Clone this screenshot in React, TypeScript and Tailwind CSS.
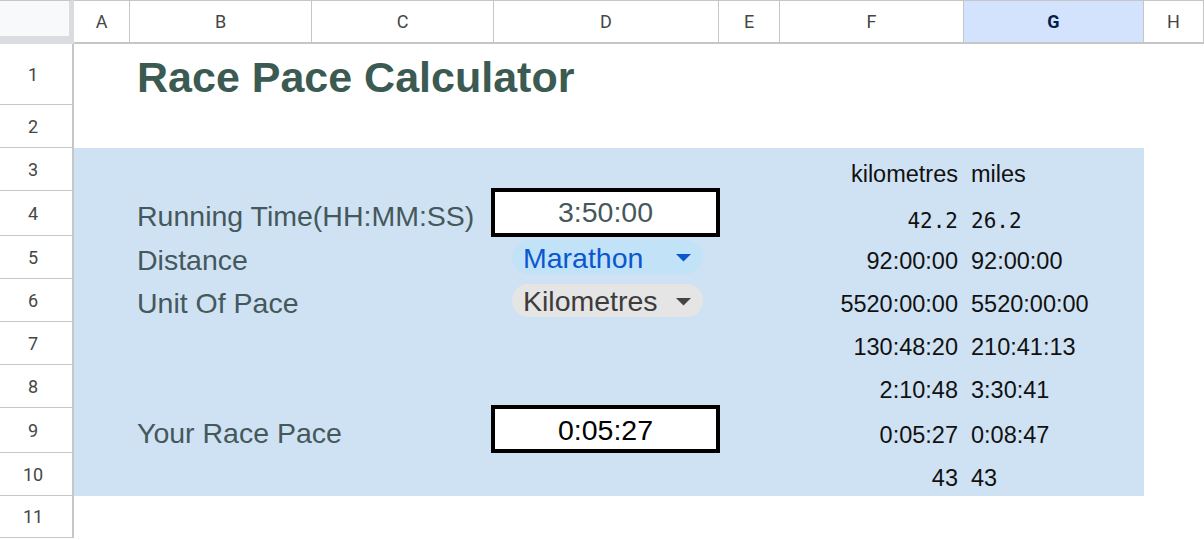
import React from "react";

const sans = "font-['Liberation_Sans',Arial,sans-serif]";

const colHeads = [
  { label: "A", cls: "col-start-2" },
  { label: "B", cls: "col-start-3" },
  { label: "C", cls: "col-start-4" },
  { label: "D", cls: "col-start-5" },
  { label: "E", cls: "col-start-6" },
  { label: "F", cls: "col-start-7" },
  { label: "G", cls: "col-start-8", active: true },
  { label: "H", cls: "col-start-9" },
];

const rowHeads = [
  { n: 1, cls: "row-start-2" },
  { n: 2, cls: "row-start-3" },
  { n: 3, cls: "row-start-4" },
  { n: 4, cls: "row-start-5" },
  { n: 5, cls: "row-start-6" },
  { n: 6, cls: "row-start-7" },
  { n: 7, cls: "row-start-8" },
  { n: 8, cls: "row-start-9" },
  { n: 9, cls: "row-start-10" },
  { n: 10, cls: "row-start-11" },
  { n: 11, cls: "row-start-12" },
];

// right-hand table, kilometres (F) and miles (G)
const results = [
  { row: "row-start-5", km: "42.2", mi: "26.2", mono: true },
  { row: "row-start-6", km: "92:00:00", mi: "92:00:00" },
  { row: "row-start-7", km: "5520:00:00", mi: "5520:00:00" },
  { row: "row-start-8", km: "130:48:20", mi: "210:41:13" },
  { row: "row-start-9", km: "2:10:48", mi: "3:30:41" },
  { row: "row-start-10", km: "0:05:27", mi: "0:08:47" },
  { row: "row-start-11", km: "43", mi: "43" },
];

function Caret({ color }: { color: string }) {
  return (
    <svg width="15" height="8" viewBox="0 0 15 8" className="shrink-0">
      <path d="M0 0 H15 L7.5 7.5 Z" fill={color} />
    </svg>
  );
}

function Label({ row, text }: { row: string; text: string }) {
  return (
    <div
      className={`col-start-3 col-end-5 ${row} flex items-center pl-[7px] pt-[5px] whitespace-nowrap text-[28.5px] leading-[33px] text-[#45585b] ${sans}`}
    >
      {text}
    </div>
  );
}

export default function App() {
  return (
    <div className="w-[1204px] h-[540px] overflow-hidden bg-white">
      <div className="grid grid-cols-[74px_56px_182px_182px_225px_61px_184px_180px_60px] grid-rows-[44px_61px_43px_43px_45px_43px_43px_43px_43px_45px_43px_42px]">
        {/* corner */}
        <div className="col-start-1 row-start-1 bg-[#f8f9fa] border-t border-[#c4c7c5] border-b-[8px] border-r-[5px] border-b-[#dadcdf] border-r-[#dadcdf]" />

        {colHeads.map((c) => (
          <div
            key={c.label}
            className={`${c.cls} row-start-1 flex items-center justify-center border-t border-r border-b-2 border-[#c4c7c5] font-['Roboto',sans-serif] text-[18px] ${
              c.active ? "bg-[#d3e3fd] font-bold text-[#041e49]" : "bg-white text-[#444746]"
            }`}
          >
            {c.label}
          </div>
        ))}

        {rowHeads.map((r) => (
          <div
            key={r.n}
            className={`col-start-1 ${r.cls} flex items-center justify-center pr-[6px] border-r-2 border-b border-[#c4c7c5] bg-white font-['Roboto',sans-serif] text-[18px] text-[#444746]`}
          >
            {r.n}
          </div>
        ))}

        {/* blue block */}
        <div className="col-start-2 col-end-9 row-start-4 row-end-12 bg-[#cfe2f3]" />

        <div
          className={`col-start-3 col-end-9 row-start-2 flex items-center pl-[7px] pt-[4px] whitespace-nowrap text-[43px] leading-[50px] font-bold text-[#3b5a52] ${sans}`}
        >
          Race Pace Calculator
        </div>

        <Label row="row-start-5" text="Running Time(HH:MM:SS)" />
        <Label row="row-start-6" text="Distance" />
        <Label row="row-start-7" text="Unit Of Pace" />
        <Label row="row-start-10" text="Your Race Pace" />

        <div
          className={`col-start-5 row-start-5 -ml-[3px] -mt-[3px] -mb-px -mr-px flex items-center justify-center border-[4px] border-black bg-white text-[28.5px] leading-[33px] text-[#45585b] ${sans}`}
        >
          3:50:00
        </div>

        <div className="col-start-5 row-start-6 pl-[18px] pt-[4px]">
          <div
            className={`w-[191px] h-[34px] rounded-full bg-[#c2e2f7] flex items-center justify-between pl-[11px] pr-[12px] pt-[2px] text-[28.5px] leading-[33px] text-[#0b57d0] ${sans}`}
          >
            <span>Marathon</span>
            <Caret color="#0b57d0" />
          </div>
        </div>

        <div className="col-start-5 row-start-7 pl-[18px] pt-[5px]">
          <div
            className={`w-[191px] h-[33px] rounded-full bg-[#e5e5e5] flex items-center justify-between pl-[11px] pr-[12px] pt-[2px] text-[28.5px] leading-[33px] text-[#3c3c3c] ${sans}`}
          >
            <span>Kilometres</span>
            <Caret color="#444444" />
          </div>
        </div>

        <div
          className={`col-start-5 row-start-10 -ml-[3px] -mt-[3px] -mr-px flex items-center justify-center pt-[2px] border-[4px] border-black bg-white text-[28.5px] leading-[33px] text-black ${sans}`}
        >
          0:05:27
        </div>

        <div
          className={`col-start-7 row-start-4 flex items-end justify-end pr-[6px] pb-[3px] text-[23.5px] leading-[27px] text-[#111] ${sans}`}
        >
          kilometres
        </div>
        <div
          className={`col-start-8 row-start-4 flex items-end pl-[7px] pb-[3px] text-[23.5px] leading-[27px] text-[#111] ${sans}`}
        >
          miles
        </div>

        {results.map((r) => (
          <React.Fragment key={r.row}>
            <div
              className={`col-start-7 ${r.row} flex items-end justify-end pr-[6px] text-[#111] whitespace-nowrap ${
                r.mono
                  ? "pb-[3px] text-[21px] leading-[24px] font-['DejaVu_Sans_Mono',monospace]"
                  : `pb-[4px] text-[23.5px] leading-[27px] ${sans}`
              }`}
            >
              {r.km}
            </div>
            <div
              className={`col-start-8 ${r.row} flex items-end pl-[7px] text-[#111] whitespace-nowrap ${
                r.mono
                  ? "pb-[3px] text-[21px] leading-[24px] font-['DejaVu_Sans_Mono',monospace]"
                  : `pb-[4px] text-[23.5px] leading-[27px] ${sans}`
              }`}
            >
              {r.mi}
            </div>
          </React.Fragment>
        ))}
      </div>
    </div>
  );
}
